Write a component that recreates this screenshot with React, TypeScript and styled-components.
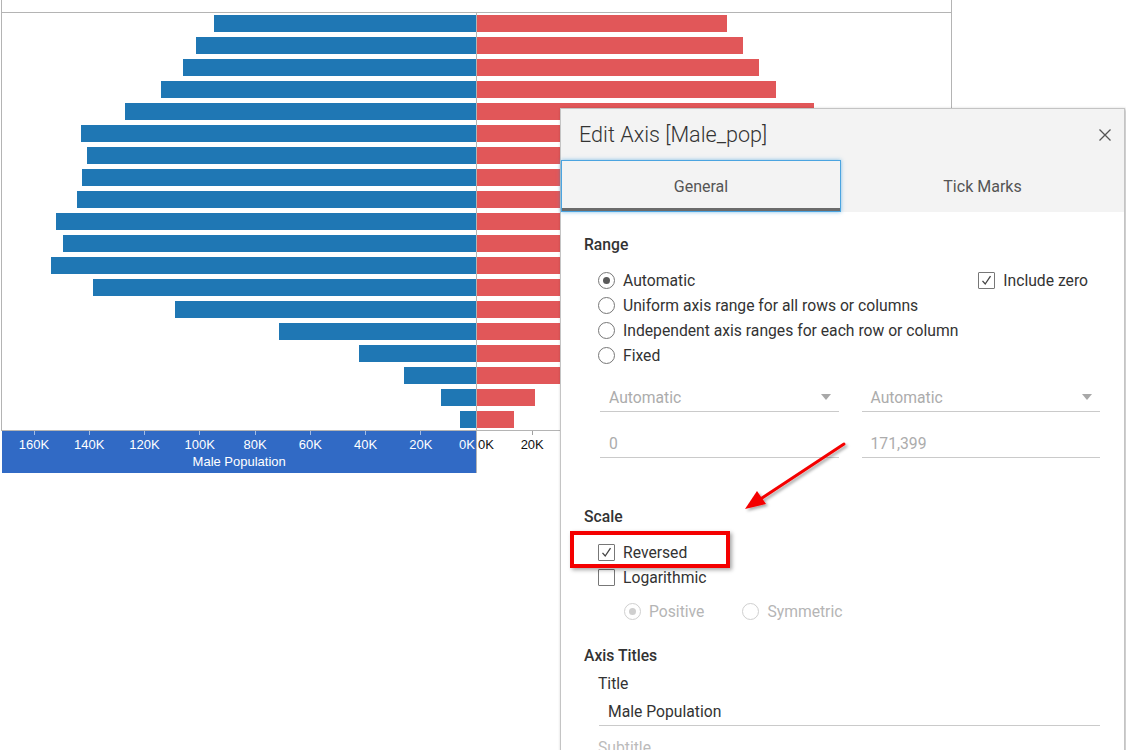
import React from "react";
import styled, { createGlobalStyle } from "styled-components";

const GlobalStyle = createGlobalStyle`
  html, body { margin: 0; padding: 0; background: #fff; }
  body { font-family: Roboto, "Noto Sans", sans-serif; }
  *, *::before, *::after { box-sizing: border-box; }
`;

const LINE = "#b4b4b4";
const BLUE = "#1f77b4";
const RED = "#e15759";

const Canvas = styled.div`
  position: relative;
  width: 1126px;
  height: 750px;
  overflow: hidden;
  background: #fff;
`;

/* ---------- chart ---------- */
const ChartPane = styled.div`
  margin-left: 1px;
  width: 951px;
`;

const TopStrip = styled.div`
  height: 13px;
  border-left: 1px solid ${LINE};
  border-right: 1px solid ${LINE};
  border-bottom: 1px solid ${LINE};
`;

const Plot = styled.div`
  display: grid;
  grid-template-columns: 475px 474px;
  height: 418px;
  overflow: hidden;
  border-left: 1px solid ${LINE};
  border-right: 1px solid ${LINE};
  border-bottom: 1px solid ${LINE};
`;

const BarColumn = styled.div<{ $side: "left" | "right" }>`
  display: flex;
  flex-direction: column;
  border-right: ${(p) => (p.$side === "left" ? `1px solid ${LINE}` : "none")};
`;

const BarRow = styled.div<{ $side: "left" | "right" }>`
  flex: 0 0 22px;
  height: 22px;
  padding-top: 2px;
  display: flex;
  justify-content: ${(p) => (p.$side === "left" ? "flex-end" : "flex-start")};
`;

const Bar = styled.div<{ $color: string }>`
  height: 17px;
  background: ${(p) => p.$color};
`;

const AxisRow = styled.div`
  display: grid;
  grid-template-columns: 475px 474px;
  padding-left: 1px;
  font-family: "Liberation Sans", Arial, sans-serif;
  font-size: 13px;
`;

const MaleAxis = styled.div`
  height: 42px;
  background: #316ac5;
  border-right: 1px solid ${LINE};
  color: #fff;
  padding-left: 4.4px;
`;

const FemaleAxis = styled.div`
  height: 42px;
  color: #111;
`;

const TickGrid = styled.div<{ $cols: string }>`
  display: grid;
  grid-template-columns: ${(p) => p.$cols};
`;

const TickMark = styled.div<{ $color: string; $show: boolean }>`
  height: 4px;
  background: ${(p) =>
    p.$show
      ? `linear-gradient(${p.$color}, ${p.$color}) center / 1px 100% no-repeat`
      : "none"};
`;

const TickLabel = styled.div<{ $align: string }>`
  margin-top: 2px;
  line-height: 16px;
  text-align: ${(p) => p.$align};
  padding: 0 1px;
  white-space: nowrap;
`;

const AxisTitle = styled.div`
  margin-top: 1px;
  line-height: 16px;
  text-align: center;
  padding-right: 4px;
`;

/* ---------- dialog ---------- */
const Dialog = styled.div`
  position: absolute;
  left: 560px;
  top: 108px;
  width: 565px;
  height: 680px;
  background: #fff;
  border: 1px solid #c4c4c4;
  box-shadow: 1px 1px 3px rgba(0, 0, 0, 0.3);
  color: #333;
  font-family: Roboto, "Noto Sans", sans-serif;
`;

const Header = styled.div`
  background: #f3f3f3;
`;

const TitleBar = styled.div`
  height: 51px;
  display: flex;
  align-items: center;
  justify-content: space-between;
  padding: 0 13px 0 18px;
`;

const Title = styled.div`
  font-size: 21.6px;
  font-weight: 300;
  color: #333;
`;

const CloseButton = styled.div`
  width: 12px;
  height: 12px;
  display: flex;
`;

const Tabs = styled.div`
  display: grid;
  grid-template-columns: 280px 1fr;
  height: 52px;
`;

const Tab = styled.div<{ $active?: boolean }>`
  display: flex;
  align-items: center;
  justify-content: center;
  font-size: 16px;
  color: #555;
  border: 1px solid ${(p) => (p.$active ? "#4ba4e0" : "transparent")};
  box-shadow: ${(p) =>
    p.$active ? "inset 0 -3px 0 #6b6b6b, 0 0 4px rgba(75,164,224,0.7)" : "none"};
`;

const Body = styled.div`
  padding: 23px 24px 0 23px;
  font-size: 15.7px;
`;

const SectionHeading = styled.div<{ $gap?: number }>`
  font-weight: 500;
  line-height: 20px;
  color: #333;
  margin-top: ${(p) => p.$gap ?? 0}px;
`;

const RangeBlock = styled.div`
  display: flex;
  justify-content: space-between;
  align-items: flex-start;
  margin-top: 12.5px;
  padding-left: 14px;
  padding-right: 12px;
`;

const OptionList = styled.div<{ $gap?: number; $indent?: number }>`
  display: flex;
  flex-direction: column;
  margin-top: ${(p) => p.$gap ?? 0}px;
  padding-left: ${(p) => p.$indent ?? 0}px;
`;

const InlineOptions = styled.div`
  display: flex;
  gap: 38px;
  margin-top: 9px;
  padding-left: 40px;
`;

const OptionRow = styled.div<{ $disabled?: boolean }>`
  display: flex;
  align-items: center;
  gap: 8px;
  height: 25px;
  color: ${(p) => (p.$disabled ? "#b5b5b5" : "#333")};
  white-space: nowrap;
`;

const RadioCircle = styled.span<{ $checked?: boolean; $disabled?: boolean }>`
  width: 17px;
  height: 17px;
  border-radius: 50%;
  border: 1px solid ${(p) => (p.$disabled ? "#cfcfcf" : "#777")};
  background: #fff;
  display: flex;
  align-items: center;
  justify-content: center;
  flex: 0 0 auto;
  &::after {
    content: "";
    width: 7px;
    height: 7px;
    border-radius: 50%;
    background: ${(p) => (p.$disabled ? "#cfcfcf" : "#5a5a5a")};
    display: ${(p) => (p.$checked ? "block" : "none")};
  }
`;

const CheckSquare = styled.span`
  width: 17px;
  height: 17px;
  border: 1px solid #777;
  border-radius: 1px;
  background: #fff;
  display: flex;
  align-items: center;
  justify-content: center;
  flex: 0 0 auto;
`;

const FieldGrid = styled.div<{ $cols?: number; $gap?: number; $indent?: number }>`
  display: grid;
  grid-template-columns: repeat(${(p) => p.$cols ?? 2}, 1fr);
  column-gap: 23px;
  row-gap: 17px;
  margin-top: ${(p) => p.$gap ?? 15.5}px;
  margin-left: ${(p) => p.$indent ?? 16}px;
`;

const Field = styled.div<{ $muted?: boolean }>`
  height: 29px;
  display: flex;
  align-items: center;
  justify-content: space-between;
  padding: 0 8px 0 9px;
  border-bottom: 1px solid #cacaca;
  color: ${(p) => (p.$muted ? "#acacac" : "#333")};
`;

const Caret = styled.span`
  width: 0;
  height: 0;
  border-left: 5px solid transparent;
  border-right: 5px solid transparent;
  border-top: 6px solid #a8a8a8;
`;

const FieldLabel = styled.div<{ $gap: number; $muted?: boolean }>`
  margin-top: ${(p) => p.$gap}px;
  padding-left: 14px;
  line-height: 20px;
  color: ${(p) => (p.$muted ? "#bbb" : "#333")};
`;

/* ---------- annotations ---------- */
const Highlight = styled.div`
  position: absolute;
  left: 570px;
  top: 531px;
  width: 160px;
  height: 37px;
  border: 4px solid #f40000;
  box-shadow: 2px 2px 4px rgba(0, 0, 0, 0.35);
  pointer-events: none;
`;

const ArrowLayer = styled.svg`
  position: absolute;
  left: 0;
  top: 0;
  pointer-events: none;
`;

/* ---------- data ---------- */
const male = [262, 280, 293, 315, 351, 395, 389, 394, 399, 420, 413, 425, 383, 301, 197, 117, 72, 35, 16];
const female = [250, 266, 282, 299, 337, 385, 380, 385, 392, 412, 405, 418, 380, 300, 200, 120, 90, 58, 37];

const maleTicks = ["160K", "140K", "120K", "100K", "80K", "60K", "40K", "20K", "0K"];
const femaleTicks = ["0K", "20K"];

const Radio = ({ label, checked, disabled }: { label: string; checked?: boolean; disabled?: boolean }) => (
  <OptionRow $disabled={disabled}>
    <RadioCircle $checked={checked} $disabled={disabled} />
    {label}
  </OptionRow>
);

const Check = ({ label, checked }: { label: string; checked?: boolean }) => (
  <OptionRow>
    <CheckSquare>
      {checked && (
        <svg width="13" height="13" viewBox="0 0 13 13">
          <path d="M2.5 6.8 L5.2 10 L10.5 2.2" fill="none" stroke="#444" strokeWidth="1.3" />
        </svg>
      )}
    </CheckSquare>
    {label}
  </OptionRow>
);

export default function App() {
  return (
    <>
      <GlobalStyle />
      <Canvas>
        <ChartPane>
          <TopStrip />
          <Plot>
            <BarColumn $side="left">
              {male.map((w, i) => (
                <BarRow key={i} $side="left">
                  <Bar $color={BLUE} style={{ width: w }} />
                </BarRow>
              ))}
            </BarColumn>
            <BarColumn $side="right">
              {female.map((w, i) => (
                <BarRow key={i} $side="right">
                  <Bar $color={RED} style={{ width: w }} />
                </BarRow>
              ))}
            </BarColumn>
          </Plot>
          <AxisRow>
            <MaleAxis>
              <TickGrid $cols="repeat(8, 55.25px) 1fr">
                {maleTicks.map((t, i) => (
                  <TickMark key={t} $color="rgba(255,255,255,0.55)" $show={i < 8} />
                ))}
              </TickGrid>
              <TickGrid $cols="repeat(8, 55.25px) 1fr">
                {maleTicks.map((t, i) => (
                  <TickLabel key={t} $align={i < 8 ? "center" : "right"}>
                    {t}
                  </TickLabel>
                ))}
              </TickGrid>
              <AxisTitle>Male Population</AxisTitle>
            </MaleAxis>
            <FemaleAxis>
              <TickGrid $cols="27.6px repeat(8, 55.25px)">
                {femaleTicks.map((t, i) => (
                  <TickMark key={t} $color="#a0a0a0" $show={i > 0} />
                ))}
              </TickGrid>
              <TickGrid $cols="27.6px repeat(8, 55.25px)">
                {femaleTicks.map((t, i) => (
                  <TickLabel key={t} $align={i === 0 ? "left" : "center"}>
                    {t}
                  </TickLabel>
                ))}
              </TickGrid>
            </FemaleAxis>
          </AxisRow>
        </ChartPane>

        <Dialog>
          <Header>
            <TitleBar>
              <Title>Edit Axis [Male_pop]</Title>
              <CloseButton>
                <svg width="12" height="12" viewBox="0 0 12 12">
                  <path d="M0.5 0.5 L11.5 11.5 M11.5 0.5 L0.5 11.5" stroke="#555" strokeWidth="1.3" fill="none" />
                </svg>
              </CloseButton>
            </TitleBar>
            <Tabs>
              <Tab $active>General</Tab>
              <Tab>Tick Marks</Tab>
            </Tabs>
          </Header>
          <Body>
            <SectionHeading>Range</SectionHeading>
            <RangeBlock>
              <OptionList>
                <Radio label="Automatic" checked />
                <Radio label="Uniform axis range for all rows or columns" />
                <Radio label="Independent axis ranges for each row or column" />
                <Radio label="Fixed" />
              </OptionList>
              <Check label="Include zero" checked />
            </RangeBlock>
            <FieldGrid>
              <Field $muted>
                Automatic
                <Caret />
              </Field>
              <Field $muted>
                Automatic
                <Caret />
              </Field>
              <Field $muted>0</Field>
              <Field $muted>171,399</Field>
            </FieldGrid>

            <SectionHeading $gap={49}>Scale</SectionHeading>
            <OptionList $gap={12.5} $indent={14}>
              <Check label="Reversed" checked />
              <Check label="Logarithmic" />
            </OptionList>
            <InlineOptions>
              <Radio label="Positive" checked disabled />
              <Radio label="Symmetric" disabled />
            </InlineOptions>

            <SectionHeading $gap={22.5}>Axis Titles</SectionHeading>
            <FieldLabel $gap={8}>Title</FieldLabel>
            <FieldGrid $cols={1} $gap={3} $indent={15}>
              <Field>Male Population</Field>
            </FieldGrid>
            <FieldLabel $gap={12} $muted>
              Subtitle
            </FieldLabel>
          </Body>
        </Dialog>

        <Highlight />
        <ArrowLayer width="1126" height="750" viewBox="0 0 1126 750">
          <defs>
            <filter id="arrowShadow" x="-20%" y="-20%" width="140%" height="140%">
              <feDropShadow dx="2" dy="2" stdDeviation="1.5" floodColor="#000" floodOpacity="0.35" />
            </filter>
          </defs>
          <g filter="url(#arrowShadow)">
            <line x1="844" y1="444" x2="759" y2="500" stroke="#f40000" strokeWidth="3" strokeLinecap="round" />
            <polygon points="745,509 766,504 757,491" fill="#f40000" />
          </g>
        </ArrowLayer>
      </Canvas>
    </>
  );
}
